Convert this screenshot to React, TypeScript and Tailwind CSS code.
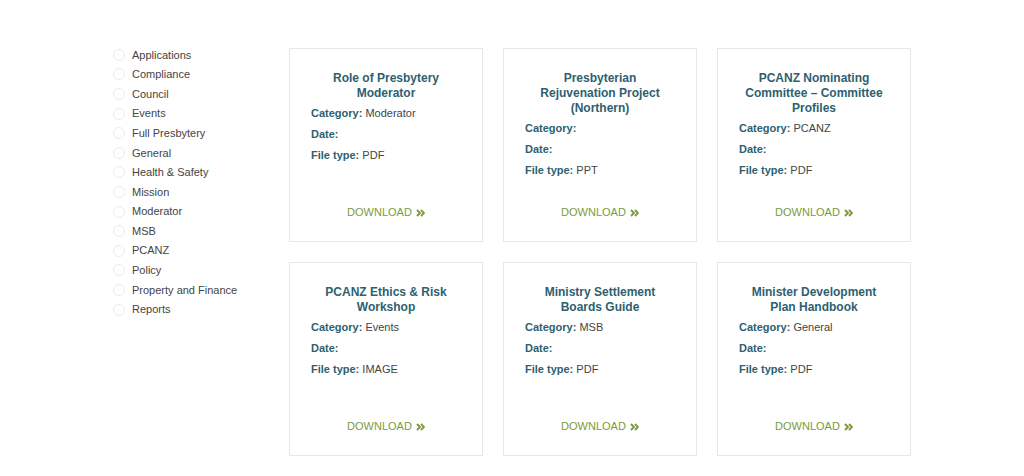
import React from "react";

type Doc = {
  title: string;
  category: string;
  date: string;
  fileType: string;
};

const categories = [
  "Applications",
  "Compliance",
  "Council",
  "Events",
  "Full Presbytery",
  "General",
  "Health & Safety",
  "Mission",
  "Moderator",
  "MSB",
  "PCANZ",
  "Policy",
  "Property and Finance",
  "Reports",
];

const docs: Doc[] = [
  { title: "Role of Presbytery Moderator", category: "Moderator", date: "", fileType: "PDF" },
  { title: "Presbyterian Rejuvenation Project (Northern)", category: "", date: "", fileType: "PPT" },
  { title: "PCANZ Nominating Committee – Committee Profiles", category: "PCANZ", date: "", fileType: "PDF" },
  { title: "PCANZ Ethics & Risk Workshop", category: "Events", date: "", fileType: "IMAGE" },
  { title: "Ministry Settlement Boards Guide", category: "MSB", date: "", fileType: "PDF" },
  { title: "Minister Development Plan Handbook", category: "General", date: "", fileType: "PDF" },
  { title: "Presbytery Strategic Plan", category: "General", date: "", fileType: "PDF" },
  { title: "Health & Safety Policy", category: "Health & Safety", date: "", fileType: "PDF" },
  { title: "Annual Report", category: "Reports", date: "", fileType: "PDF" },
];

function Chevrons() {
  return (
    <svg width="9" height="8" viewBox="0 0 9 8" className="inline-block ml-[4px] -mt-[1px]">
      <path d="M1 1l3 3-3 3M5 1l3 3-3 3" fill="none" stroke="#7a9b3b" strokeWidth="1.9" />
    </svg>
  );
}

function DocCard({ doc }: { doc: Doc }) {
  return (
    <div className="h-[194px] border border-[#e6e6e6] bg-white px-[21px] pt-[22px] pb-[21px] flex flex-col">
      <h3 className="text-center text-[12px] font-bold leading-[15px] text-[#2e5f70]">{doc.title}</h3>
      <div className="mt-[2px] text-[11px]">
        <p className="h-[21px] leading-[21px] text-[#444]">
          <span className="font-bold text-[#2e5f70]">Category:</span> {doc.category}
        </p>
        <p className="h-[21px] leading-[21px] text-[#444]">
          <span className="font-bold text-[#2e5f70]">Date:</span> {doc.date}
        </p>
        <p className="h-[21px] leading-[21px] text-[#444]">
          <span className="font-bold text-[#2e5f70]">File type:</span> {doc.fileType}
        </p>
      </div>
      <a href="#" className="mt-auto text-center text-[11px] leading-[15px] text-[#7a9b3b]">
        DOWNLOAD
        <Chevrons />
      </a>
    </div>
  );
}

export default function App() {
  return (
    <div className="min-h-screen bg-white font-['Liberation_Sans',Arial,sans-serif]">
      <div className="mx-auto w-[798px] pt-[48px] flex">
        <aside className="w-[176px] shrink-0">
          <ul className="flex flex-col -mt-[3px]">
            {categories.map((c) => (
              <li key={c} className="h-[19.6px] flex items-center gap-[7px]">
                <span className="w-[12px] h-[12px] rounded-full border border-[#ebebeb] bg-white" />
                <span className="text-[11px] text-[#444]">{c}</span>
              </li>
            ))}
          </ul>
        </aside>
        <main className="flex-1">
          <div className="grid grid-cols-[194px_194px_194px] gap-x-[20px] gap-y-[20px]">
            {docs.map((d) => (
              <DocCard key={d.title} doc={d} />
            ))}
          </div>
        </main>
      </div>
    </div>
  );
}
